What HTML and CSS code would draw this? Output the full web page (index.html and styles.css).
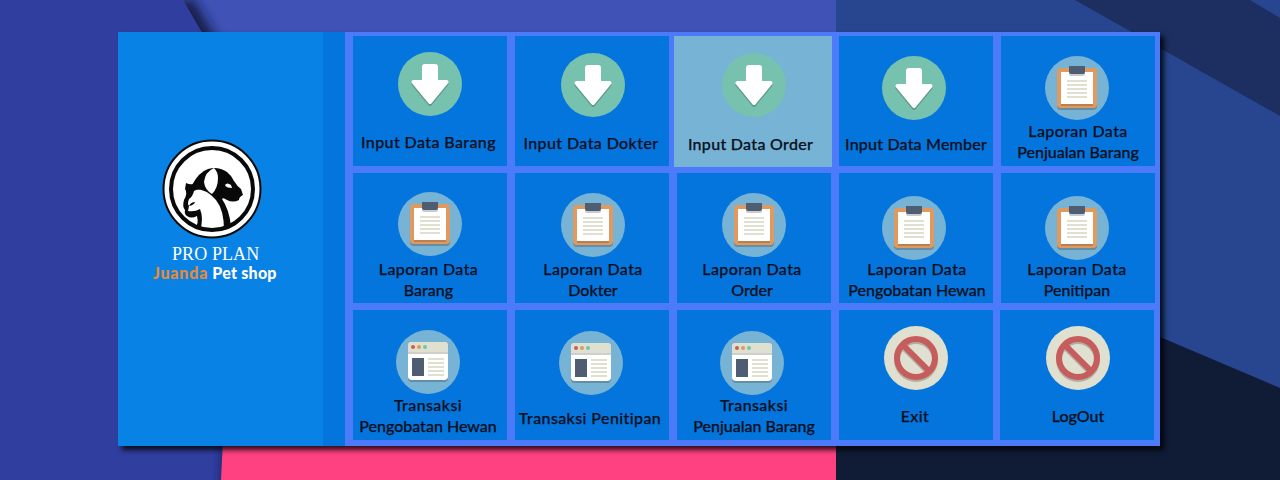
FILE: index.html
```html
<!DOCTYPE html>
<html lang="id">
<head>
<meta charset="utf-8">
<title>Juanda Pet shop</title>
<link rel="stylesheet" href="styles.css">
</head>
<body>
<svg class="defs" width="0" height="0" aria-hidden="true">
  <symbol id="down" viewBox="0 0 64 64">
    <circle cx="32" cy="32" r="32" fill="#76c2af"/>
    <g fill="#231f20" stroke="#231f20" opacity=".25" transform="translate(0 2)"><rect x="24" y="12" width="16" height="20" rx="3" stroke="none"/><path d="M15.500 30h33L32 50z" stroke-width="4" stroke-linejoin="round"/></g>
    <g fill="#fff" stroke="#fff"><rect x="24" y="12" width="16" height="20" rx="3" stroke="none"/><path d="M15.500 30h33L32 50z" stroke-width="4" stroke-linejoin="round"/></g>
  </symbol>
  <symbol id="clip" viewBox="0 0 64 64">
    <circle cx="32" cy="32" r="32" fill="#77b3d4"/>
    <rect x="12" y="14" width="40" height="40" rx="4" fill="#231f20" opacity=".25"/>
    <rect x="12" y="12" width="40" height="40" rx="4" fill="#e0995e"/>
    <path d="M16 48h32v2H16z" fill="#bb8052"/>
    <path d="M16 16h32v32H16z" fill="#fff"/>
    <path d="M24 14h16v4q0 2-2 2H26q-2 0-2-2z" fill="#cbcbcd"/>
    <path d="M24 10h16v6q0 2-2 2H26q-2 0-2-2z" fill="#4f5d73"/>
    <path d="M22 25h20M22 29h20M22 33h20M22 37h20M22 41h20" stroke="#e0e0d1" stroke-width="2"/>
  </symbol>
  <symbol id="browser" viewBox="0 0 64 64">
    <circle cx="32" cy="32" r="32" fill="#77b3d4"/>
    <rect x="12" y="14" width="40" height="38" rx="4" fill="#231f20" opacity=".25"/>
    <rect x="12" y="12" width="40" height="38" rx="4" fill="#fff"/>
    <path d="M12 24v-8q0-4 4-4h32q4 0 4 4v8z" fill="#cfcfcd"/>
    <path d="M12 22v-6q0-4 4-4h32q4 0 4 4v6z" fill="#e0e0d1"/>
    <circle cx="17" cy="17" r="2" fill="#c75c5c"/><circle cx="23" cy="17" r="2" fill="#e0995e"/><circle cx="29" cy="17" r="2" fill="#76c2af"/>
    <path d="M16 28h12v18H16z" fill="#4f5d73"/>
    <path d="M32 29h16M32 33h16M32 37h16M32 41h16M32 45h16" stroke="#e0e0d1" stroke-width="2"/>
  </symbol>
  <symbol id="stop" viewBox="0 0 64 64">
    <circle cx="32" cy="32" r="32" fill="#e0e0d1"/>
    <g fill="none" stroke-width="6"><g stroke="#231f20" opacity=".25" transform="translate(0 2)"><circle cx="32" cy="32" r="19"/><path d="M19 19l26 26"/></g>
    <g stroke="#c75c5c"><circle cx="32" cy="32" r="19"/><path d="M19 19l26 26"/></g></g>
  </symbol>
</svg>
<svg class="backdrop" viewBox="0 0 1280 480" aria-hidden="true">
  <defs>
    <filter id="soft" x="-50%" y="-50%" width="200%" height="200%"><feGaussianBlur stdDeviation="6"/></filter>
    <filter id="edge" x="-300%" y="-50%" width="700%" height="200%"><feGaussianBlur stdDeviation="3"/></filter>
    <clipPath id="right"><path d="M183 0L222 67V446L221 480H836V0z"/></clipPath>
  </defs>
  <path d="M0 0h1280v480H0z" fill="#303e9f"/>
  <path d="M183 0h653v446H222V67z" fill="#4052b5"/>
  <path d="M220 440h4v50h-5z" fill="#1a2458" opacity=".8" filter="url(#edge)"/>
  <path d="M223 440h613v40H221z" fill="#ff4081"/>
  <path d="M182 2L222 70" stroke="#141d48" stroke-width="22" filter="url(#soft)" clip-path="url(#right)"/>
  <path d="M836 0h444v480H836z" fill="#27468f"/>
  <path d="M1075 0h175l30 18v98z" fill="#1c2f60"/>
  <path d="M1160 337l120 51v92H836v-40h324z" fill="#101b36"/>
</svg>
<main class="panel">
  <aside class="brand">
    <svg class="logo" viewBox="0 0 100 100" aria-label="Logo">
      <circle cx="50" cy="50" r="48.500" fill="#fff" stroke="#090909" stroke-width="2"/>
      <circle cx="50" cy="50" r="41" fill="#fff" stroke="#090909" stroke-width="4"/>
      <path d="M30 46Q37 33 46 30Q56 27 65 33Q70 37 72 42Q75 47 79 50L81 56Q77 58 77 61Q71 64 65 61Q61 58 60 60Q67 70 69 87L81 78Q76 87 62 91Q62 71 54 61Q44 49 31 50Z" fill="#090909"/>
      <path d="M52 29Q56 33 56 39Q56 49 50 55Q43 51 42 43Q43 33 52 29Z" fill="#fff"/>
      <path d="M63 46q2-3 6 0l1 3q-6 0-7-3z" fill="#fff"/>
      <path d="M24 44Q28 46 32 45Q39 45 43 51Q36 49 32 52Q31 57 27 60Q25 65 27 67L26 72Q33 73 38 70Q42 80 38 91L33 89Q37 85 35 77Q29 80 25 77Q22 75 23 71Q20 68 22 61Q26 54 23 50Z" fill="#090909"/>
      <path d="M27 67q2-4 6-4-1 3-6 4z" fill="#090909"/>
    </svg>
    <p class="product">PRO PLAN</p>
    <p class="shop"><span class="name">Juanda</span> <span>Pet shop</span></p>
  </aside>
  <div class="strip"></div>
  <nav class="menu">
    <a class="tile"><svg class="icon"><use href="#down"/></svg><span class="label">Input Data Barang</span></a>
    <a class="tile"><svg class="icon"><use href="#down"/></svg><span class="label">Input Data Dokter</span></a>
    <a class="tile active"><svg class="icon"><use href="#down"/></svg><span class="label">Input Data Order</span></a>
    <a class="tile"><svg class="icon"><use href="#down"/></svg><span class="label">Input Data Member</span></a>
    <a class="tile"><svg class="icon"><use href="#clip"/></svg><span class="label">Laporan Data<br>Penjualan Barang</span></a>
    <a class="tile"><svg class="icon"><use href="#clip"/></svg><span class="label">Laporan Data<br>Barang</span></a>
    <a class="tile"><svg class="icon"><use href="#clip"/></svg><span class="label">Laporan Data<br>Dokter</span></a>
    <a class="tile"><svg class="icon"><use href="#clip"/></svg><span class="label">Laporan Data<br>Order</span></a>
    <a class="tile"><svg class="icon"><use href="#clip"/></svg><span class="label">Laporan Data<br>Pengobatan Hewan</span></a>
    <a class="tile"><svg class="icon"><use href="#clip"/></svg><span class="label">Laporan Data<br>Penitipan</span></a>
    <a class="tile"><svg class="icon"><use href="#browser"/></svg><span class="label">Transaksi<br>Pengobatan Hewan</span></a>
    <a class="tile"><svg class="icon"><use href="#browser"/></svg><span class="label">Transaksi Penitipan</span></a>
    <a class="tile"><svg class="icon"><use href="#browser"/></svg><span class="label">Transaksi<br>Penjualan Barang</span></a>
    <a class="tile"><svg class="icon"><use href="#stop"/></svg><span class="label">Exit</span></a>
    <a class="tile logout"><svg class="icon"><use href="#stop"/></svg><span class="label">LogOut</span></a>
  </nav>
</main>
</body>
</html>
```
FILE: styles.css
```css
* { box-sizing: border-box; }
body { margin: 0; height: 480px; overflow: hidden; padding: 32px 120px 34px 118px; }
.defs { position: absolute; }
.backdrop { position: absolute; inset: 0; width: 1280px; height: 480px; z-index: -1; }
.panel { display: flex; width: 1042px; height: 414px; box-shadow: 4px 4px 5px rgba(0, 0, 0, .8); }
.brand { width: 205px; padding-top: 107px; background: #0982e6; color: #fff; display: flex; flex-direction: column; }
.logo { width: 100px; height: 100px; margin-left: 44px; flex: none; }
.product { margin: 5px 0 0 54px; font: 18px/20px "Liberation Serif", serif; letter-spacing: .1px; white-space: nowrap; }
.shop { margin: 0 0 0 35px; font: 900 16px/18px Lato, sans-serif; letter-spacing: .25px; white-space: nowrap; }
.name { color: #e68a35; letter-spacing: .8px; }
.strip { width: 22px; background: #0575de; }
.menu { width: 815px; background: #4b7bfa; padding: 4px 5px 6px 8px; display: grid; grid-template-columns: repeat(5, 154px); grid-template-rows: repeat(3, 130px); gap: 7px 8px; }
.tile { --top: 16px; --gap: 15px; --shift: 0px; --text: 0px; background: #0575de; display: flex; flex-direction: column; align-items: center; padding-top: var(--top); }
.icon { width: 64px; height: 64px; flex: none; margin-left: var(--shift); }
.label { margin-top: var(--gap); margin-left: var(--text); font: 500 16px/21px Lato, sans-serif; color: #07101c; text-align: center; white-space: nowrap; -webkit-text-stroke: .25px #07101c; }
.label::first-line { letter-spacing: .4px; }
.tile:nth-child(1) { --text: -3px; }
.tile:nth-child(2) { --top: 17px; --shift: 2px; --text: -2px; }
.tile:nth-child(3) { --top: 17px; --gap: 16px; --shift: 2px; --text: -5px; }
.tile:nth-child(3) .label::first-line { letter-spacing: .3px; }
.tile:nth-child(4) { --top: 20px; --gap: 13px; --shift: -4px; }
.tile:nth-child(4) .label::first-line { letter-spacing: .2px; }
.tile:nth-child(5) { --top: 20px; --gap: 0px; --shift: -2px; }
.tile:nth-child(6) { --top: 19px; --gap: 2px; --text: -3px; }
.tile:nth-child(7) { --top: 20px; --gap: 1px; --shift: 2px; --text: 2px; }
.tile:nth-child(8) { --top: 20px; --gap: 1px; --text: -4px; }
.tile:nth-child(9) { --top: 23px; --gap: -2px; --shift: -4px; --text: 2px; }
.tile:nth-child(10) { --top: 23px; --gap: -2px; --shift: -2px; --text: -2px; }
.tile:nth-child(11) { --top: 20px; --gap: 0px; --shift: -4px; --text: -4px; }
.tile:nth-child(12) { --top: 21px; --gap: 12px; --shift: -2px; --text: -4px; }
.tile:nth-child(13) { --top: 21px; --gap: -1px; --shift: -4px; }
.tile:nth-child(14) { --gap: 15px; --text: -2px; }
.tile:nth-child(15) { --gap: 15px; --shift: 2px; --text: 2px; }
.tile:nth-child(15) .label::first-line { letter-spacing: 0; }
.active { background: #77b3d4; margin: 0 -1px -1px -3px; }
.logout { margin: 0 1px 0 -1px; }
```
